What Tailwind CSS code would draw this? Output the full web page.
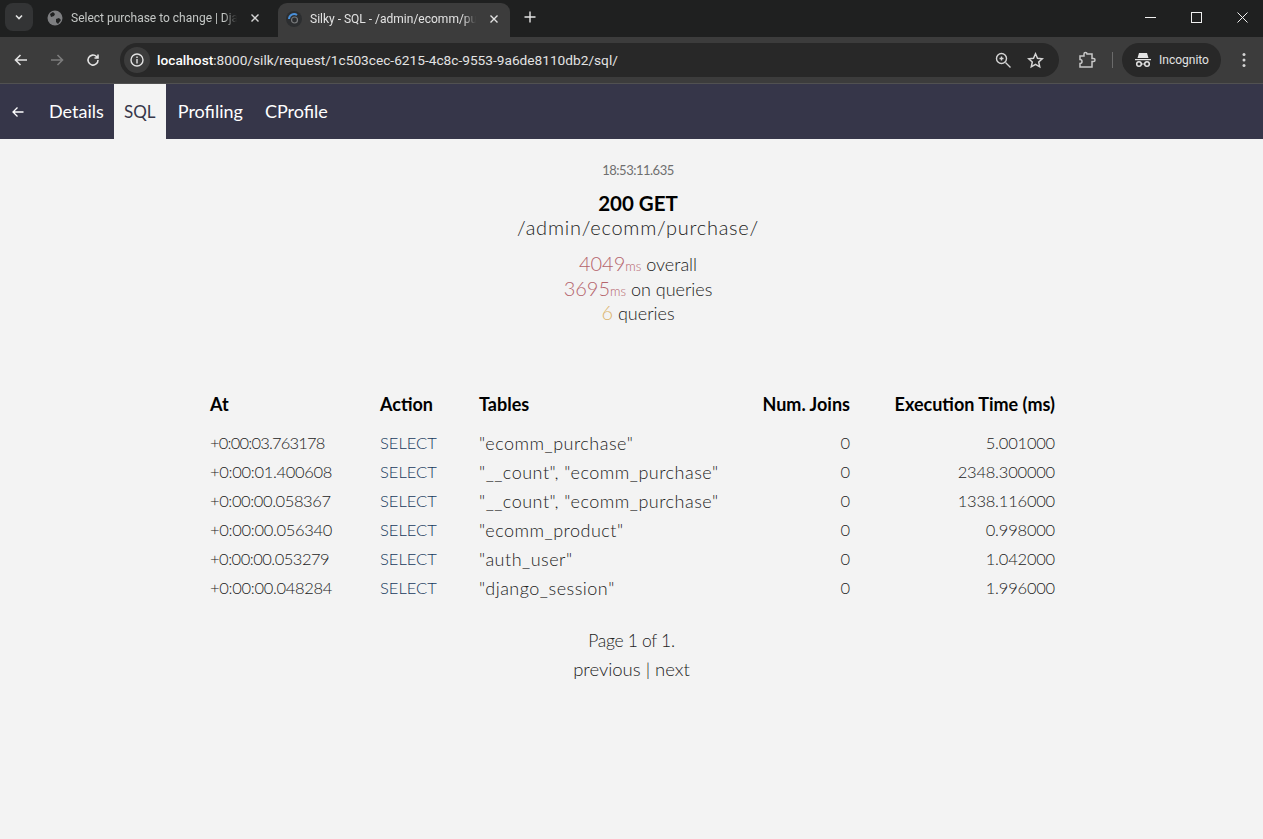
<!DOCTYPE html>
<html lang="en">
  <head>
    <meta charset="UTF-8" />
    <title>Silky - SQL - /admin/ecomm/purchase/</title>
    <script src="https://cdn.jsdelivr.net/npm/@tailwindcss/browser@4"></script>
  </head>
  <body class="bg-[#f3f3f3] font-['Lato','Open_Sans',sans-serif] h-[839px] overflow-hidden">
    <!-- tab strip -->
    <div class="h-[37px] bg-[#1f2020] flex items-start font-['Roboto',sans-serif] text-[12px]">
      <div class="ml-[5px] mt-[3px] w-[28px] h-[28px] rounded-[8px] bg-[#333435] flex items-center justify-center">
        <svg width="10" height="10" viewBox="0 0 10 10" fill="none" stroke="#e3e3e3" stroke-width="1.6"><path d="M2 3.5l3 3 3-3" /></svg>
      </div>
      <div class="h-[36px] flex items-center">
        <svg width="16" height="16" viewBox="0 0 16 16" class="ml-[14px]"><circle cx="8" cy="8" r="7.5" fill="#7d7e80" /><path d="M3 4l3-2 2 2-1 2-3 1zM9 9l3-1 2 2-3 4-2-2z" fill="#1f2020" /></svg>
        <span class="ml-[8px] w-[166px] whitespace-nowrap text-[#c4c7c5] [mask-image:linear-gradient(to_right,black_92%,transparent)]">Select purchase to change | Dja</span>
        <svg width="10" height="10" viewBox="0 0 10 10" class="ml-[13px]" stroke="#d5d5d5" stroke-width="1.4"><path d="M1.5 1.5l7 7M8.5 1.5l-7 7" /></svg>
      </div>
      <div class="ml-[18px] mt-[3px] pb-[3px] w-[232px] h-[34px] rounded-t-[9px] bg-[#3c3c3c] flex items-center">
        <svg width="18" height="18" viewBox="0 0 18 18" class="ml-[7px]" fill="none"><circle cx="9" cy="9" r="8" fill="#2c2e30" /><path d="M4 9a5 5 0 0 1 8-4" stroke="#4a90d9" stroke-width="2" /><circle cx="9.500" cy="10" r="3" stroke="#77797b" stroke-width="1.200" /></svg>
        <span class="ml-[7px] w-[166px] whitespace-nowrap text-[#e3e3e3] [mask-image:linear-gradient(to_right,black_92%,transparent)]">Silky - SQL - /admin/ecomm/pu</span>
        <svg width="10" height="10" viewBox="0 0 10 10" class="ml-[13px]" stroke="#e3e3e3" stroke-width="1.4"><path d="M1.500 1.500l7 7M8.500 1.500l-7 7" /></svg>
      </div>
      <svg width="12" height="12" viewBox="0 0 12 12" class="ml-[14px] mt-[11px]" stroke="#e3e3e3" stroke-width="1.400"><path d="M6 .5v11M.5 6h11" /></svg>
      <div class="ml-auto flex items-center h-[34px]">
        <svg width="11" height="11" viewBox="0 0 11 11" class="mr-[35px]" stroke="#f0f0f0" stroke-width="1"><path d="M0 5.500h11" /></svg>
        <svg width="11" height="11" viewBox="0 0 11 11" class="mr-[35px]" fill="none" stroke="#f0f0f0" stroke-width="1"><rect x=".5" y=".5" width="10" height="10" /></svg>
        <svg width="11" height="11" viewBox="0 0 11 11" class="mr-[15px]" stroke="#f0f0f0" stroke-width="1"><path d="M.5.5l10 10M10.500.5l-10 10" /></svg>
      </div>
    </div>
    <!-- toolbar -->
    <div class="h-[47px] bg-[#3c3c3c] border-b border-[#515151] flex items-center">
      <svg width="14" height="14" viewBox="0 0 14 14" class="ml-[14px]" fill="none" stroke="#e3e3e3" stroke-width="1.600"><path d="M13 7H1.500M6.500 2l-5 5 5 5" /></svg>
      <svg width="14" height="14" viewBox="0 0 14 14" class="ml-[22px]" fill="none" stroke="#7c7c7c" stroke-width="1.600"><path d="M1 7h11.500M7.500 2l5 5-5 5" /></svg>
      <svg width="14" height="14" viewBox="0 0 14 14" class="ml-[22px]" fill="none" stroke="#e3e3e3" stroke-width="1.600"><path d="M12 7a5 5 0 1 1-1.500-3.500L12 5M12 1.500V5H8.500" /></svg>
      <div class="ml-[20px] w-[939px] h-[34px] rounded-full bg-[#282828] flex items-center font-['Roboto',sans-serif] text-[13.7px]">
        <div class="ml-[4px] w-[26px] h-[26px] rounded-full bg-[#3c3c3c] flex items-center justify-center">
          <svg width="14" height="14" viewBox="0 0 14 14" fill="none" stroke="#e3e3e3" stroke-width="1.400"><circle cx="7" cy="7" r="6" /><path d="M7 6v4.500M7 3.500v1.500" /></svg>
        </div>
        <span class="ml-[7px] text-[#e3e3e3]"><span class="text-white font-medium">localhost</span>:8000/silk/request/1c503cec-6215-4c8c-9553-9a6de8110db2/sql/</span>
        <svg width="17" height="17" viewBox="0 0 17 17" class="ml-auto" fill="none" stroke="#d5d5d5" stroke-width="1.400"><circle cx="6.500" cy="6.500" r="5" /><path d="M10.500 10.500l5 5M4.500 6.500h4M6.500 4.500v4" /></svg>
        <svg width="17" height="17" viewBox="0 0 17 17" class="ml-[15px] mr-[15px]" fill="none" stroke="#d5d5d5" stroke-width="1.500"><path d="M8.500 1.800l2 4.500 4.800.5-3.600 3.200 1 4.800-4.200-2.500-4.200 2.500 1-4.800L1.700 6.800l4.800-.5z" /></svg>
      </div>
      <svg width="18" height="18" viewBox="0 0 18 18" class="ml-[19px]" fill="none" stroke="#c8c8c8" stroke-width="1.500"><path d="M2 5h4V3a1.500 1.500 0 0 1 3 0v0h5v4.500h1.500a1.500 1.500 0 0 1 0 3H14V16H2v-3.500a2 2 0 0 0 0-4z" /></svg>
      <div class="ml-[16px] w-px h-[16px] bg-[#6b6b6b]"></div>
      <div class="ml-[9px] w-[99px] h-[34px] rounded-full bg-[#282828] flex items-center font-['Roboto',sans-serif] text-[12px] text-[#e3e3e3]">
        <svg width="18" height="16" viewBox="0 0 18 16" class="ml-[12px]" fill="#e3e3e3"><path d="M5 1h8l1.500 5h-11zM1 7h16v1.300H1z" /><circle cx="5" cy="12" r="2.300" fill="none" stroke="#e3e3e3" stroke-width="1.500" /><circle cx="13" cy="12" r="2.300" fill="none" stroke="#e3e3e3" stroke-width="1.500" /><path d="M7 11.500h4v1H7z" /></svg>
        <span class="ml-[7px]">Incognito</span>
      </div>
      <svg width="4" height="16" viewBox="0 0 4 16" class="ml-[21px]" fill="#d5d5d5"><circle cx="2" cy="2.500" r="1.500" /><circle cx="2" cy="8" r="1.500" /><circle cx="2" cy="13.500" r="1.500" /></svg>
    </div>
    <!-- silk nav -->
    <nav class="h-[55px] bg-[#363649] flex items-stretch text-[18px] text-white">
      <div class="w-[38px] pr-[2px] flex items-center justify-center">
        <svg width="12" height="12" viewBox="0 0 12 12" fill="none" stroke="#ffffff" stroke-width="1.300"><path d="M11.500 6H1M5.500 1.500L1 6l4.500 4.500" /></svg>
      </div>
      <a class="pl-[11px] pr-[10px] flex items-center">Details</a>
      <a class="w-[52px] flex items-center justify-center bg-[#f3f3f3] text-[#363649] text-[17px]">SQL</a>
      <a class="pl-[12px] pr-[11px] flex items-center">Profiling</a>
      <a class="pl-[11px] flex items-center">CProfile</a>
    </nav>
    <main class="text-center">
      <div class="pl-[13px]">
        <div class="pt-[23px] text-[13px] leading-[16px] tracking-[-0.5px] text-[#6f6f6f]">18:53:11.635</div>
        <div class="mt-[13px] text-[20.5px] leading-[24px] font-bold text-black">200 GET</div>
        <div class="text-[20px] leading-[24px] font-light tracking-[0.75px] text-[#222]">/admin/ecomm/purchase/</div>
        <div class="mt-[13px] text-[18px] leading-[24.5px] font-light text-[#222]">
          <div><span class="text-[20px] leading-none text-[#b5646c]">4049</span><span class="text-[13px] leading-none text-[#b5646c]">ms</span> overall</div>
          <div><span class="text-[20px] leading-none text-[#b5646c]">3695</span><span class="text-[13px] leading-none text-[#b5646c]">ms</span> on queries</div>
          <div><span class="text-[20px] leading-none text-[#dcb56e]">6</span> queries</div>
        </div>
      </div>
      <table class="mt-[62px] ml-[210px] w-[845px] table-fixed text-left text-[16.5px] font-light text-[#222]">
        <thead>
          <tr class="h-[41px] text-[18px] text-black font-bold align-top">
            <th class="w-[170px] pt-[3px]">At</th>
            <th class="w-[99px] pt-[3px]">Action</th>
            <th class="w-[270px] pt-[3px]">Tables</th>
            <th class="w-[101px] pt-[3px] text-right">Num. Joins</th>
            <th class="pt-[3px] text-right">Execution Time (ms)</th>
          </tr>
        </thead>
        <tbody>
          <tr class="h-[29px]"><td class="tracking-[-0.8px]">+0:00:03.763178</td><td class="text-[#173a5e]">SELECT</td><td class="text-[18px] tracking-[0.5px]">"ecomm_purchase"</td><td class="text-right">0</td><td class="text-right tracking-[-0.2px]">5.001000</td></tr>
          <tr class="h-[29px]"><td class="tracking-[-0.3px]">+0:00:01.400608</td><td class="text-[#173a5e]">SELECT</td><td class="text-[18px] tracking-[0.5px]">"__count", "ecomm_purchase"</td><td class="text-right">0</td><td class="text-right tracking-[-0.2px]">2348.300000</td></tr>
          <tr class="h-[29px]"><td class="tracking-[-0.4px]">+0:00:00.058367</td><td class="text-[#173a5e]">SELECT</td><td class="text-[18px] tracking-[0.5px]">"__count", "ecomm_purchase"</td><td class="text-right">0</td><td class="text-right tracking-[-0.2px]">1338.116000</td></tr>
          <tr class="h-[29px]"><td class="tracking-[-0.3px]">+0:00:00.056340</td><td class="text-[#173a5e]">SELECT</td><td class="text-[18px] tracking-[0.5px]">"ecomm_product"</td><td class="text-right">0</td><td class="text-right tracking-[-0.2px]">0.998000</td></tr>
          <tr class="h-[29px]"><td class="tracking-[-0.5px]">+0:00:00.053279</td><td class="text-[#173a5e]">SELECT</td><td class="text-[18px] tracking-[0.5px]">"auth_user"</td><td class="text-right">0</td><td class="text-right tracking-[-0.2px]">1.042000</td></tr>
          <tr class="h-[29px]"><td class="tracking-[-0.3px]">+0:00:00.048284</td><td class="text-[#173a5e]">SELECT</td><td class="text-[18px] tracking-[0.5px]">"django_session"</td><td class="text-right">0</td><td class="text-right tracking-[-0.2px]">1.996000</td></tr>
        </tbody>
      </table>
      <div class="mt-[23px] text-[18px] leading-[29px] font-light text-[#222]">
        <div class="text-[17.5px] tracking-[-0.3px]">Page 1 of 1.</div>
        <div class="text-[18.500px]">previous | next</div>
      </div>
    </main>
  </body>
</html>
